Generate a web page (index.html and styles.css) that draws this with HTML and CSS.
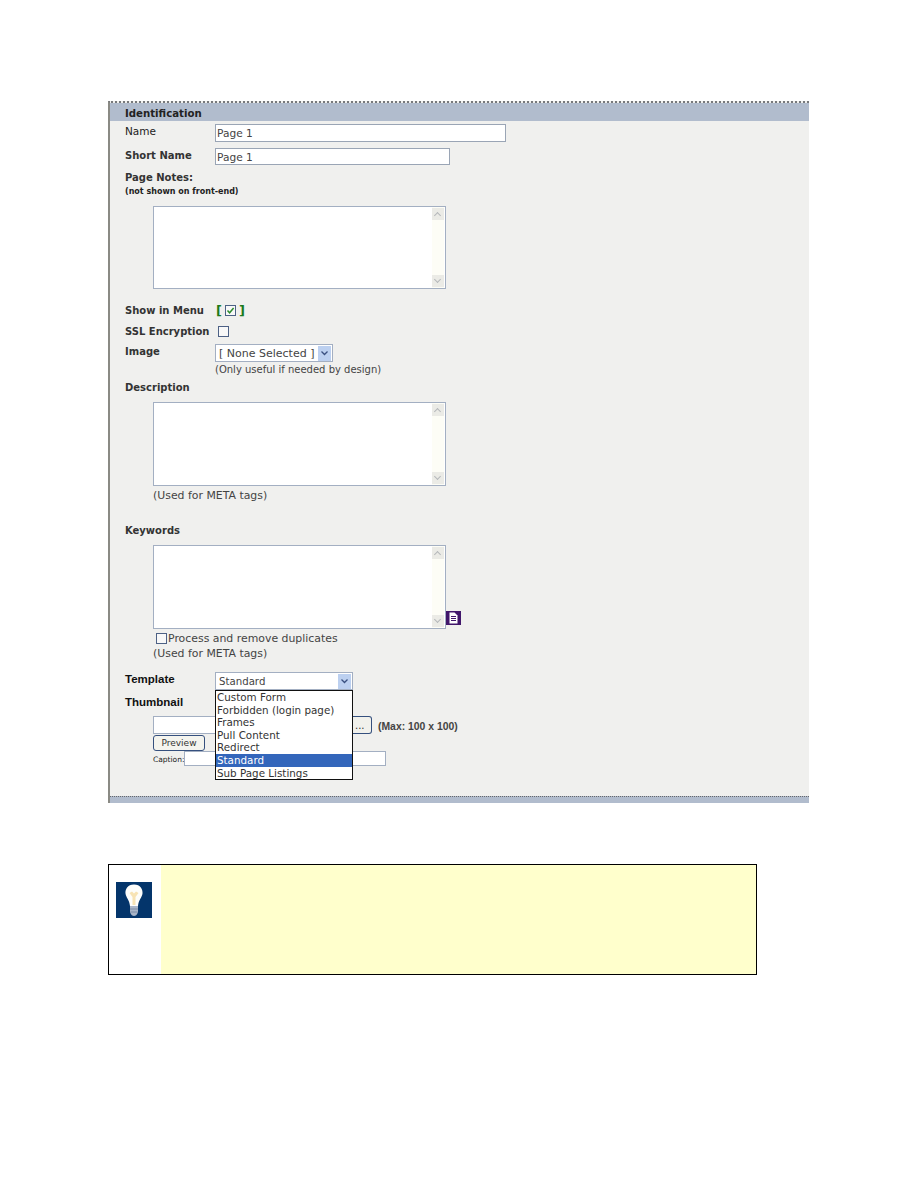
FILE: index.html
```html
<!DOCTYPE html>
<html lang="en">
<head>
    <meta charset="UTF-8">
    <title>Page Properties</title>
    <link rel="stylesheet" href="styles.css">
</head>
<body>
    <div class="panel">
        <div class="panel-title">Identification</div>

        <div class="row row-name">
            <div class="label label-plain">Name</div>
            <input class="field field-long" type="text" value="Page 1">
        </div>
        <div class="row row-short">
            <div class="label">Short Name</div>
            <input class="field field-short" type="text" value="Page 1">
        </div>

        <div class="label notes-label">Page Notes:</div>
        <div class="small-note">(not shown on front-end)</div>
        <div class="memo memo-notes">
            <div class="scrollbar"><span class="arrow up"></span><span class="arrow down"></span></div>
        </div>

        <div class="row row-menu">
            <div class="label">Show in Menu</div>
            <div class="bracket">[<span class="check checked"><svg width="9" height="9" viewBox="0 0 9 9"><path d="M1.5 4.5 L3.6 6.8 L7.6 2" fill="none" stroke="#2c8a2c" stroke-width="1.5"/></svg></span>]</div>
        </div>
        <div class="row row-ssl">
            <div class="label">SSL Encryption</div>
            <span class="check check-ssl"></span>
        </div>
        <div class="row row-image">
            <div class="label">Image</div>
            <div>
                <div class="select select-image">
                    <span class="select-text">[ None Selected ]</span>
                    <span class="select-btn"><svg width="9" height="6" viewBox="0 0 9 6"><path d="M1.5 1.5 L4.5 4.5 L7.5 1.5" fill="none" stroke="#3a5080" stroke-width="1.3"/></svg></span>
                </div>
                <div class="hint">(Only useful if needed by design)</div>
            </div>
        </div>

        <div class="label desc-label">Description</div>
        <div class="memo memo-desc">
            <div class="scrollbar"><span class="arrow up"></span><span class="arrow down"></span></div>
        </div>
        <div class="hint hint-wide indent hint-desc">(Used for META tags)</div>

        <div class="label keywords-label">Keywords</div>
        <div class="memo-wrap">
            <div class="memo memo-keywords">
                <div class="scrollbar"><span class="arrow up"></span><span class="arrow down"></span></div>
            </div>
            <span class="doc-icon">
                <svg width="15" height="14" viewBox="0 0 15 14">
                    <path d="M3.5 1.5 H8.5 L11.5 4.5 V12.5 H3.5 Z" fill="#fff"/>
                    <path d="M5 5.5 H10 M5 7.5 H10 M5 9.5 H10" stroke="#41176b" stroke-width="1"/>
                </svg>
            </span>
        </div>
        <div class="process">
            <span class="check"></span>
            <span class="hint hint-wide">Process and remove duplicates</span>
        </div>
        <div class="hint hint-wide indent hint-keywords">(Used for META tags)</div>

        <div class="row row-template">
            <div class="label label-dark">Template</div>
            <div class="select-wrap">
                <div class="select select-template">
                    <span class="select-text">Standard</span>
                    <span class="select-btn"><svg width="9" height="6" viewBox="0 0 9 6"><path d="M1.5 1.5 L4.5 4.5 L7.5 1.5" fill="none" stroke="#3a5080" stroke-width="1.3"/></svg></span>
                </div>
                <ul class="dropdown">
                    <li>Custom Form</li>
                    <li>Forbidden (login page)</li>
                    <li>Frames</li>
                    <li>Pull Content</li>
                    <li>Redirect</li>
                    <li class="selected">Standard</li>
                    <li>Sub Page Listings</li>
                </ul>
            </div>
        </div>

        <div class="label label-dark thumb-label">Thumbnail</div>
        <div class="file-row">
            <div class="file-input"></div>
            <div class="browse">...</div>
            <div class="max-note">(Max: 100 x 100)</div>
        </div>
        <div class="preview">Preview</div>
        <div class="caption-row">
            <span class="caption-label">Caption:</span>
            <div class="caption-input"></div>
        </div>

        <div class="panel-foot"></div>
    </div>

    <div class="tip">
        <div class="tip-side">
            <svg class="bulb" width="36" height="36" viewBox="0 0 36 36">
                <rect width="36" height="36" fill="#04356b"/>
                <path d="M18 2.5 C11.5 2.5 9 7.5 9.5 11.5 C10 15.5 13.5 18 14 24 H22 C22.5 18 26 15.5 26.5 11.5 C27 7.5 24.5 2.5 18 2.5 Z" fill="#fdfdfb"/>
                <path d="M16.5 23 V15 L13.5 11 L16 9.5 L18 11.5 L20 9.5 L22.5 11 L19.5 15 V23 Z" fill="#f7e3b5"/>
                <path d="M14 24 H22 V30 C21 33 19.5 34 18 34 C16.5 34 15 33 14 30 Z" fill="#a9b5c8"/>
                <path d="M14 27 H22 M14.5 30 H21.5" stroke="#7c8ca6" stroke-width="1"/>
            </svg>
        </div>
        <div class="tip-body"></div>
    </div>
</body>
</html>
```

FILE: styles.css
```css
body {
    margin: 0;
    padding: 101px 0 0 108px;
    background-color: #fff;
    font-family: "DejaVu Sans", sans-serif;
    font-size: 10px;
    color: #333;
}

/* main panel */
.panel {
    box-sizing: border-box;
    width: 701px;
    height: 702px;
    display: flex;
    flex-direction: column;
    align-items: flex-start;
    padding-left: 15px;
    background-color: #f0f0ee;
    border-left: 2px solid #8a8a84;
    border-top: 2px dotted #77797c;
}

.panel-title {
    box-sizing: border-box;
    align-self: stretch;
    height: 18px;
    margin-left: -15px;
    padding-left: 15px;
    line-height: 21px;
    font-size: 10.2px;
    font-weight: bold;
    color: #222;
    background-color: #b1bccd;
}

.panel-foot {
    align-self: stretch;
    height: 7px;
    margin: auto 0 0 -15px;
    background-color: #b1bccd;
    border-top: 1px dotted #66686c;
    box-sizing: border-box;
}

.row {
    display: flex;
    align-items: flex-start;
}

.label {
    width: 90px;
    height: 14px;
    flex-shrink: 0;
    line-height: 16px;
    font-weight: bold;
    font-size: 10px;
    color: #333;
    white-space: nowrap;
}

.label-plain {
    line-height: 14px;
    font-weight: normal;
    font-size: 10.5px;
    color: #222;
}

.label-dark {
    line-height: 14px;
    color: #111;
    font-family: "Liberation Sans", sans-serif;
    font-size: 11.5px;
}

.row-name { margin-top: 3px; }
.row-short { margin-top: 6px; }
.notes-label { margin-top: 5px; }
.row-menu { margin-top: 14px; }
.row-ssl { margin-top: 7px; }
.row-image { margin-top: 6px; }
.desc-label { margin-top: 4px; }
.keywords-label { margin-top: 21px; }
.row-template { margin-top: 12px; }
.thumb-label { margin-top: 5px; }

.small-note {
    height: 12px;
    margin-top: 1px;
    line-height: 14px;
    font-size: 8px;
    font-weight: bold;
    color: #222;
}

/* text fields */
.field {
    box-sizing: border-box;
    margin: 0;
    padding: 0 0 0 1px;
    border: 1px solid #9aa5b5;
    background-color: #fff;
    font-family: "DejaVu Sans", sans-serif;
    font-size: 10.6px;
    color: #444;
    border-radius: 0;
    outline: none;
}

.field-long { width: 291px; height: 18px; }
.field-short { width: 235px; height: 17px; }

.memo {
    box-sizing: border-box;
    width: 293px;
    margin-left: 28px;
    display: flex;
    justify-content: flex-end;
    background-color: #fff;
    border: 1px solid #a3afc2;
}

.memo-notes { height: 83px; margin-top: 9px; }
.memo-desc { height: 84px; margin-top: 8px; }
.memo-keywords { height: 84px; }

.memo-wrap {
    display: flex;
    align-items: flex-end;
    margin-top: 8px;
}

.scrollbar {
    width: 12px;
    margin-right: 1px;
    padding: 1px 0;
    display: flex;
    flex-direction: column;
    justify-content: space-between;
    background-color: #fdfdf6;
}

.arrow {
    height: 12px;
    display: block;
    background-color: #ebebe6;
    position: relative;
}

.arrow::after {
    content: "";
    position: absolute;
    left: 3px;
    width: 4px;
    height: 4px;
    border-left: 1px solid #b5b8bb;
    border-top: 1px solid #b5b8bb;
}

.arrow.up::after { top: 5px; transform: rotate(45deg); }
.arrow.down::after { top: 2px; transform: rotate(225deg); }

.doc-icon {
    width: 15px;
    height: 14px;
    margin-bottom: 4px;
    background-color: #41176b;
    display: block;
}

.doc-icon svg { display: block; }

/* checkboxes */
.check {
    box-sizing: border-box;
    display: inline-flex;
    align-items: center;
    justify-content: center;
    width: 11px;
    height: 11px;
    background-color: #f8f8f8;
    border: 1px solid #4d6185;
}

.bracket {
    display: flex;
    align-items: center;
    gap: 3px;
    height: 14px;
    margin-left: 1px;
    font-size: 13px;
    font-weight: bold;
    color: #1c7a1c;
}

.check-ssl { margin: 2px 0 0 3px; }

/* selects */
.select {
    box-sizing: border-box;
    display: flex;
    align-items: center;
    justify-content: space-between;
    height: 18px;
    padding: 0 1px 0 3px;
    background-color: #fff;
    border: 1px solid #a3afc2;
    font-size: 10.2px;
    color: #444;
}

.select-image { width: 118px; font-size: 11px; }
.select-template { width: 138px; }

.select-btn {
    display: flex;
    align-items: center;
    justify-content: center;
    width: 13px;
    height: 15px;
    background-color: #bcd0f0;
}

.select-wrap { position: relative; }

.dropdown {
    position: absolute;
    top: 18px;
    left: 0;
    box-sizing: border-box;
    width: 138px;
    height: 90px;
    margin: 0;
    padding: 0;
    list-style: none;
    background-color: #fff;
    border: 1px solid #111;
    z-index: 10;
}

.dropdown li {
    height: 12.6px;
    line-height: 13.4px;
    padding-left: 1px;
    font-size: 10.35px;
    color: #333;
    white-space: nowrap;
}

.dropdown .selected {
    background-color: #3366bb;
    color: #fff;
}

.hint {
    height: 14px;
    line-height: 16px;
    font-size: 10px;
    color: #444;
    white-space: nowrap;
}

.hint-wide { font-size: 10.9px; }

.indent { margin-left: 28px; }
.hint-desc { margin-top: 2px; }
.hint-keywords { margin-top: 1px; }

.process {
    display: flex;
    align-items: center;
    gap: 1px;
    height: 14px;
    margin: 2px 0 0 31px;
}

/* thumbnail */
.file-row {
    display: flex;
    align-items: flex-start;
    margin: 7px 0 0 28px;
}

.file-input {
    box-sizing: border-box;
    width: 200px;
    height: 18px;
    background-color: #fff;
    border: 1px solid #a3afc2;
}

.browse {
    box-sizing: border-box;
    width: 19px;
    height: 18px;
    padding-left: 2px;
    line-height: 17px;
    background-color: #f1f1ec;
    border: 1px solid #35507e;
    border-left: none;
    border-radius: 0 3px 3px 0;
    color: #333;
}

.max-note {
    height: 18px;
    margin-left: 6px;
    line-height: 22px;
    font-family: "Liberation Sans", sans-serif;
    font-size: 10.4px;
    font-weight: bold;
    color: #444;
}

.preview {
    box-sizing: border-box;
    width: 52px;
    height: 16px;
    margin: 1px 0 0 28px;
    line-height: 14px;
    text-align: center;
    font-size: 9px;
    color: #333;
    background-color: #f4f4ee;
    border: 1px solid #35507e;
    border-radius: 3px;
}

.caption-row {
    display: flex;
    align-items: flex-start;
    margin-left: 28px;
}

.caption-label {
    width: 31px;
    height: 15px;
    line-height: 18px;
    font-size: 7.5px;
    color: #222;
}

.caption-input {
    box-sizing: border-box;
    width: 202px;
    height: 15px;
    background-color: #fff;
    border: 1px solid #a3afc2;
}

/* tip box */
.tip {
    box-sizing: border-box;
    display: flex;
    width: 649px;
    height: 111px;
    margin-top: 61px;
    border: 1px solid #000;
}

.tip-side {
    box-sizing: border-box;
    width: 52px;
    padding: 17px 0 0 7px;
    background-color: #fff;
}

.bulb { display: block; }

.tip-body {
    flex: 1;
    background-color: #ffffcc;
}
```
